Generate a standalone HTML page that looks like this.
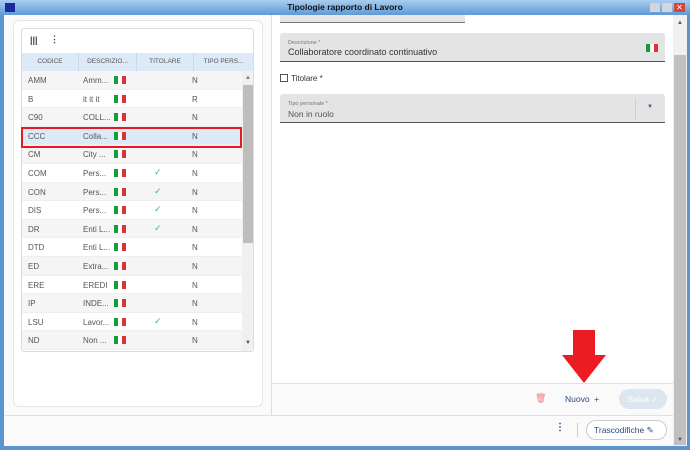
<!DOCTYPE html>
<html><head><meta charset="utf-8"><style>
*{box-sizing:border-box;margin:0;padding:0}
body{width:690px;height:450px;overflow:hidden;font-family:"Liberation Sans",sans-serif;background:#fff;position:relative}
.abs{position:absolute}
.flag{position:absolute;width:12px;height:8px;background:linear-gradient(90deg,#1a9b3a 0 33%,#fff 33% 66%,#d9343a 66%)}
.row{position:absolute;left:22px;width:220px;height:18.6px;font-size:8px;color:#555}
.row span{position:absolute;top:5px}
.hdr{position:absolute;top:53px;height:18px;font-size:6.5px;color:#555;text-align:center;line-height:18px;border-right:1px solid #c8d8ea}
</style></head><body>
<!-- window frame -->
<div class="abs" style="left:0;top:0;width:690px;height:450px;background:#5b95d0"></div>
<div class="abs" style="left:0;top:0;width:690px;height:15px;background:linear-gradient(#a9cdf0,#5f9ad6)"></div>
<div class="abs" style="left:5px;top:3px;width:10px;height:9px;background:#1b2aa0"></div>
<div class="abs" style="left:0;top:2px;width:690px;text-align:center;font-size:8.5px;font-weight:bold;color:#111">Tipologie rapporto di Lavoro</div>
<div class="abs" style="left:650px;top:3px;width:10px;height:9px;background:#cfd8e2"></div>
<div class="abs" style="left:662px;top:3px;width:10px;height:9px;background:#cfd8e2"></div>
<div class="abs" style="left:674px;top:3px;width:11px;height:9px;background:#d9443a;color:#fff;font-size:8px;text-align:center;line-height:9px">✕</div>
<div class="abs" style="left:4px;top:15px;width:683px;height:431px;background:#fafafa"></div>
<!-- left card -->
<div class="abs" style="left:13px;top:20px;width:250px;height:387px;background:#fff;border:1px solid #e6e6e6;border-radius:6px"></div>
<div class="abs" style="left:21px;top:28px;width:233px;height:324px;background:#fff;border:1px solid #ddd;border-radius:3px"></div>
<div class="abs" style="left:30px;top:35px;font-size:9px;color:#444;font-weight:bold">|||</div>
<div class="abs" style="left:50px;top:34px;font-size:9px;color:#444;font-weight:bold">⋮</div>
<div class="abs" style="left:22px;top:53px;width:231px;height:18px;background:#dceaf8"></div>
<div class="hdr" style="left:22px;width:57px">CODICE</div>
<div class="hdr" style="left:79px;width:58px">DESCRIZIO...</div>
<div class="hdr" style="left:137px;width:57px">TITOLARE</div>
<div class="hdr" style="left:194px;width:59px;border:none">TIPO PERS...</div>
<div id="rows"></div>
<div class="abs" style="left:242px;top:71px;width:11px;height:280px;background:#f0f0f0"></div>
<div class="abs" style="left:243px;top:85px;width:10px;height:158px;background:#bdbdbd"></div>
<div class="abs" style="left:245px;top:75px;font-size:6px;color:#777">▲</div>
<div class="abs" style="left:245px;top:340px;font-size:6px;color:#555">▼</div>
<!-- divider -->
<div class="abs" style="left:271px;top:15px;width:1px;height:400px;background:#ddd"></div>
<div class="abs" style="left:272px;top:15px;width:401px;height:368px;background:#fff"></div>
<div class="abs" style="left:673px;top:15px;width:14px;height:431px;background:#f0f0f0"></div>
<div class="abs" style="left:674px;top:55px;width:12px;height:390px;background:#c0c0c0"></div>
<div class="abs" style="left:677px;top:20px;font-size:6px;color:#555">▲</div>
<div class="abs" style="left:677px;top:437px;font-size:6px;color:#555">▼</div>
<!-- form -->
<div class="abs" style="left:280px;top:15px;width:185px;height:8px;background:#e6e6e6;border-bottom:1px solid #777"></div>
<div class="abs" style="left:280px;top:33px;width:385px;height:29px;background:#e4e4e4;border-bottom:1px solid #555;border-radius:3px 3px 0 0"></div>
<div class="abs" style="left:288px;top:40px;font-size:5.5px;color:#777">Descrizione *</div>
<div class="abs" style="left:288px;top:47px;font-size:9px;color:#333">Collaboratore coordinato continuativo</div>
<div class="flag" style="left:646px;top:44px"></div>
<div class="abs" style="left:280px;top:74px;width:8px;height:8px;border:1px solid #555;background:#fff"></div>
<div class="abs" style="left:291px;top:74px;font-size:8px;color:#333">Titolare *</div>
<div class="abs" style="left:280px;top:94px;width:385px;height:29px;background:#e4e4e4;border-bottom:1px solid #555;border-radius:3px 3px 0 0"></div>
<div class="abs" style="left:288px;top:101px;font-size:5.5px;color:#777">Tipo personale *</div>
<div class="abs" style="left:288px;top:109px;font-size:8.5px;color:#555">Non in ruolo</div>
<div class="abs" style="left:635px;top:98px;width:1px;height:22px;background:#d0d0d0"></div>
<div class="abs" style="left:647px;top:104px;font-size:6px;color:#2a5ca8">▼</div>
<!-- bottom bar -->
<div class="abs" style="left:272px;top:383px;width:401px;height:1px;background:#e0e0e0"></div>
<div class="abs" style="left:535px;top:393px;font-size:9px;color:#f07a7a">🗑</div>
<div class="abs" style="left:565px;top:394px;font-size:8.5px;color:#2b4a78">Nuovo&nbsp;&nbsp;+</div>
<div class="abs" style="left:619px;top:389px;width:48px;height:20px;background:#dce6f0;border-radius:10px;color:#fff;font-size:8.5px;text-align:center;line-height:20px">Salva ✓</div>
<div class="abs" style="left:4px;top:415px;width:669px;height:1px;background:#e0e0e0"></div>
<div class="abs" style="left:555px;top:422px;font-size:10px;color:#2b4a78;font-weight:bold">⋮</div>
<div class="abs" style="left:577px;top:423px;width:1px;height:14px;background:#ccc"></div>
<div class="abs" style="left:586px;top:420px;width:81px;height:20px;border:1px solid #ccc;border-radius:10px;background:#fff;font-size:8.5px;color:#2b4a78;line-height:18px;padding-left:7px">Trascodifiche ✎</div>
<!-- red arrow -->
<svg class="abs" style="left:560px;top:328px" width="50" height="57"><path d="M13 2H35V27H46L24 55L2 27H13Z" fill="#ec1c24"/></svg>
<script>
var d=[["AMM","Amm...",0,"N"],["B","it it it",0,"R"],["C90","COLL...",0,"N"],["CCC","Colla...",0,"N"],["CM","City ...",0,"N"],["COM","Pers...",1,"N"],["CON","Pers...",1,"N"],["DIS","Pers...",1,"N"],["DR","Enti L...",1,"N"],["DTD","Enti L...",0,"N"],["ED","Extra...",0,"N"],["ERE","EREDI",0,"N"],["IP","INDE...",0,"N"],["LSU","Lavor...",1,"N"],["ND","Non ...",0,"N"]];
var h="";d.forEach(function(r,i){var t=71+i*18.6;var bg=i==3?"#dceaf8":(i%2?"#fff":"#f5f5f5");if(i==0)bg="#f5f5f5";
h+='<div class="row" style="top:'+t+'px;background:'+bg+';border-bottom:1px solid #eee"><span style="left:6px">'+r[0]+'</span><span style="left:61px">'+r[1]+'</span><div class="flag" style="left:92px;top:5px"></div>'+(r[2]?'<span style="left:132px;top:3px;color:#3cb96a;font-size:9px">✓</span>':'')+'<span style="left:170px">'+r[3]+'</span></div>';});
h+='<div class="abs" style="left:21px;top:127px;width:221px;height:21px;border:2.5px solid #e31b23"></div>';
document.getElementById("rows").innerHTML=h;
</script>
</body></html>
